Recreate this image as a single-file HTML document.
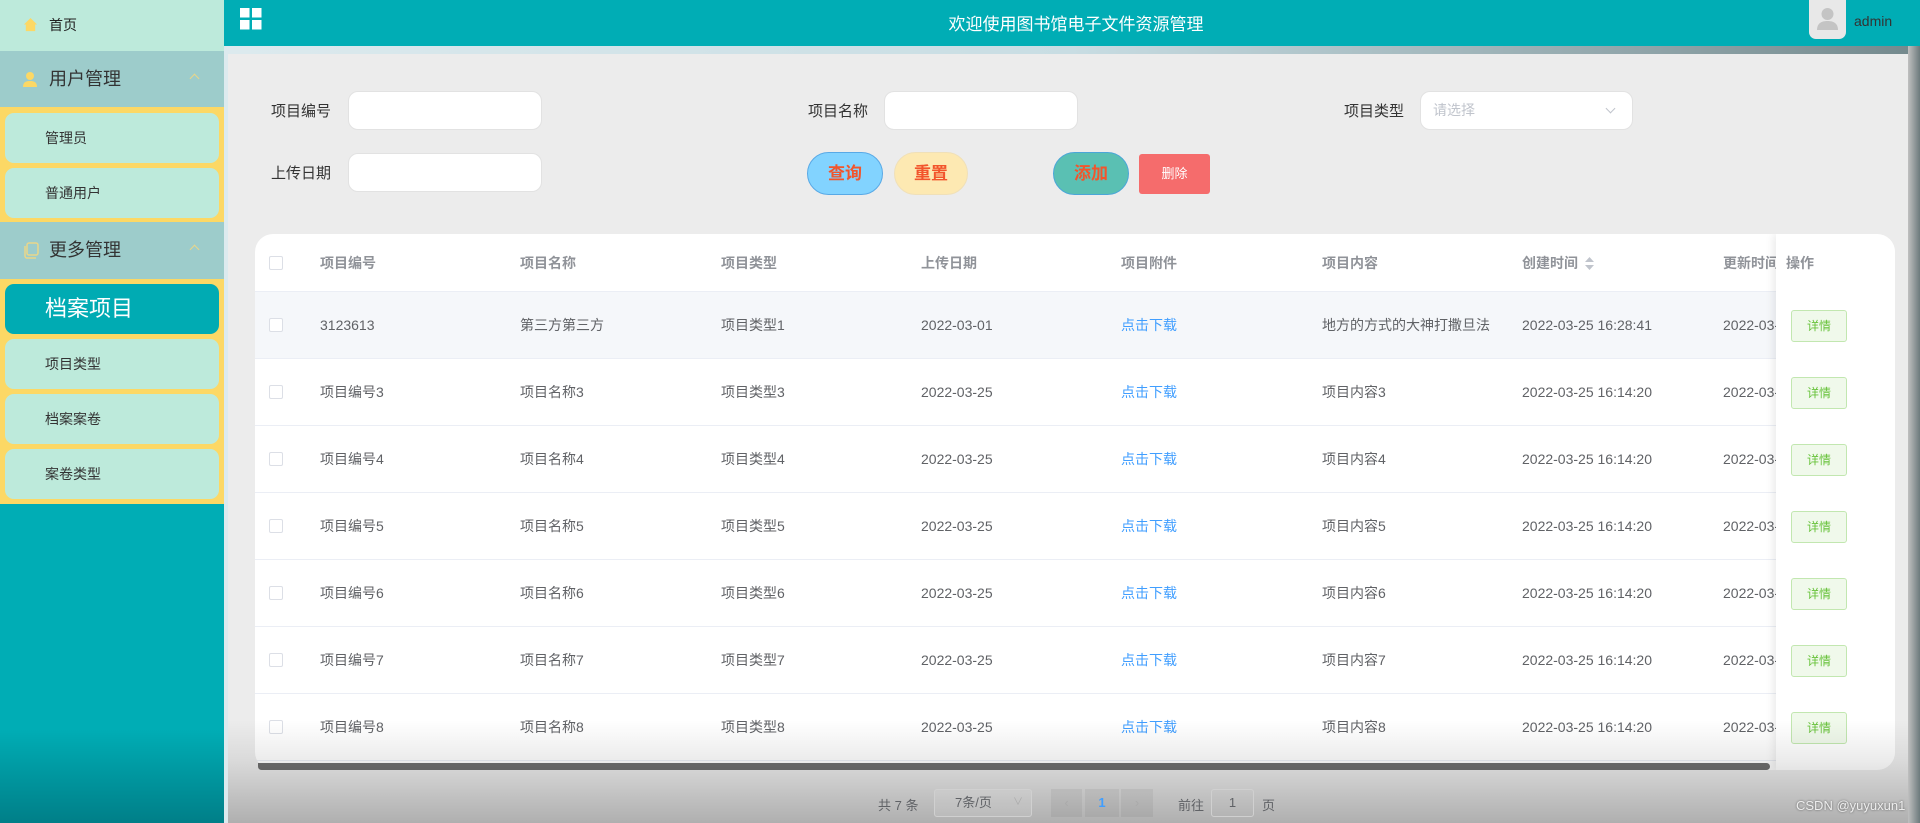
<!DOCTYPE html>
<html><head><meta charset="utf-8">
<style>
*{margin:0;padding:0;box-sizing:border-box}
body{width:1920px;height:823px;overflow:hidden;position:relative;font-family:"Liberation Sans","Noto Sans CJK SC",sans-serif;background:#ececec}
.abs{position:absolute}
#side{left:0;top:0;width:224px;height:823px;background:linear-gradient(#00adb5 0,#00adb5 730px,#007f88 823px)}
.top1{left:0;top:0;width:224px;height:51px;background:#bdeadb;font-size:14px;color:#222;line-height:51px;padding-left:49px}
.grp{left:0;width:224px;height:57px;background:#9dcccb;font-size:18px;color:#333;line-height:57px;padding-left:49px}
.yel{left:0;width:224px;background:#fcd865}
.it{left:5px;width:214px;height:50px;background:#bdeadb;border-radius:9px;font-size:14px;color:#333;line-height:50px;padding-left:40px}
.act{background:#00abb3;color:#fff;font-size:22px}
.chev{position:absolute;left:191px;top:24px;width:7px;height:7px;border-left:1px solid #e9d68a;border-top:1px solid #e9d68a;transform:rotate(45deg)}
#hdr{left:224px;top:0;width:1696px;height:46px;background:#00adb5}
.strip{left:226px;top:46px;width:1694px;height:8px;background:linear-gradient(90deg,#dceaee,#c8dde3 50%,#74898d)}
.lstrip{left:224px;top:46px;width:4px;height:777px;background:#dceaee}
.rb{left:1908px;top:46px;width:12px;height:777px;background:linear-gradient(90deg,#c0c0c0,#6c7a7c)}
.lbl{font-size:15px;color:#333}
.inp{background:#fff;border:1px solid #e2e2e2;border-radius:10px;height:39px}
.btn{height:43px;border-radius:22px;font-size:17px;font-weight:bold;color:#f2552c;text-align:center;line-height:41px}
#tbl{left:255px;top:234px;width:1640px;height:536px;background:#fff;border-radius:18px;overflow:hidden}
.row{position:absolute;left:0;width:1640px;height:67px;border-bottom:1px solid #ebeef5;font-size:14px;color:#606266}
.row span{position:absolute;top:0;line-height:66px;white-space:nowrap}
.hd span{color:#909399;font-weight:bold}
.cb{position:absolute;left:14px;top:26px;width:14px;height:14px;border:1px solid #dcdfe6;border-radius:2px;background:#fff}
.fix{left:1521px;top:0;width:119px;height:536px;background:#fff;box-shadow:-3px 0 8px rgba(0,0,0,.08)}
.det{position:absolute;left:15px;width:56px;height:32px;border:1px solid #c2e7b0;background:#f0f9eb;color:#67c23a;font-size:12px;text-align:center;line-height:30px;border-radius:3px}
.link{color:#409eff}
.fade{left:228px;top:720px;width:1680px;height:103px;background:linear-gradient(rgba(0,0,0,0),rgba(0,0,0,.08) 40%,rgba(0,0,0,.26))}
.pg{font-size:13px;color:#606266}
</style></head><body>
<div id="side" class="abs"></div>
<div class="abs top1"><svg class="abs" style="left:23px;top:17px" width="15" height="15" viewBox="0 0 16 16"><path d="M8 1L1 8h2v7h10V8h2z" fill="#fcd865"/></svg>首页</div>
<div class="abs grp" style="top:51px"><svg class="abs" style="left:22px;top:20px" width="16" height="17" viewBox="0 0 16 17"><circle cx="8" cy="5" r="4" fill="#fcd865"/><path d="M1 16c0-5 3-6 7-6s7 1 7 6z" fill="#fcd865"/></svg>用户管理<span class="chev"></span></div>
<div class="abs yel" style="top:107px;height:115px"></div>
<div class="abs it" style="top:113px">管理员</div>
<div class="abs it" style="top:168px">普通用户</div>
<div class="abs grp" style="top:222px"><svg class="abs" style="left:22px;top:20px" width="17" height="17" viewBox="0 0 17 17"><rect x="5" y="1" width="11" height="12" rx="2" fill="none" stroke="#e9d68a" stroke-width="1.5"/><path d="M3 4v10a2 2 0 0 0 2 2h9" fill="none" stroke="#e9d68a" stroke-width="1.5"/></svg>更多管理<span class="chev"></span></div>
<div class="abs yel" style="top:279px;height:225px"></div>
<div class="abs it act" style="top:284px">档案项目</div>
<div class="abs it" style="top:339px">项目类型</div>
<div class="abs it" style="top:394px">档案案卷</div>
<div class="abs it" style="top:449px">案卷类型</div>

<div id="hdr" class="abs"></div>
<svg class="abs" style="left:240px;top:8px" width="22" height="22" viewBox="0 0 22 22"><rect x="0" y="0" width="9.5" height="9.5" fill="#fff"/><rect x="12" y="0" width="9.5" height="9.5" fill="#fff"/><rect x="0" y="12" width="9.5" height="9.5" fill="#fff"/><rect x="12" y="12" width="9.5" height="9.5" fill="#fff"/></svg>
<div class="abs" style="left:900px;top:10px;width:352px;text-align:center;color:#fff;font-size:17px">欢迎使用图书馆电子文件资源管理</div>
<div class="abs" style="left:1809px;top:0;width:37px;height:39px;background:#e8e8e8;border-radius:0 0 7px 7px"><svg width="37" height="39" viewBox="0 0 37 39"><circle cx="18.5" cy="14" r="6" fill="#c4c4c4"/><path d="M8 30c0-7 5-9 10.5-9S29 23 29 30z" fill="#c4c4c4"/></svg></div>
<div class="abs" style="left:1854px;top:13px;font-size:14px;color:#333">admin</div>
<div class="abs strip"></div>
<div class="abs lstrip"></div>
<div class="abs rb"></div>

<div class="abs lbl" style="left:271px;top:100px">项目编号</div>
<div class="abs inp" style="left:348px;top:91px;width:194px"></div>
<div class="abs lbl" style="left:271px;top:162px">上传日期</div>
<div class="abs inp" style="left:348px;top:153px;width:194px"></div>
<div class="abs lbl" style="left:808px;top:100px">项目名称</div>
<div class="abs inp" style="left:884px;top:91px;width:194px"></div>
<div class="abs lbl" style="left:1344px;top:100px">项目类型</div>
<div class="abs inp" style="left:1420px;top:91px;width:213px;font-size:14px;color:#c0c4cc;line-height:37px;padding-left:12px">请选择<span style="position:absolute;right:18px;top:13px;width:7px;height:7px;border-right:1px solid #c0c4cc;border-bottom:1px solid #c0c4cc;transform:rotate(45deg)"></span></div>
<div class="abs btn" style="left:807px;top:152px;width:76px;background:#82d3ff;border:1px solid #58a9e6">查询</div>
<div class="abs btn" style="left:894px;top:152px;width:74px;background:#fde9b2;border:1px solid #f0e0b8">重置</div>
<div class="abs btn" style="left:1053px;top:152px;width:76px;background:#5ac0b3;border:1px solid #4aa6d8">添加</div>
<div class="abs" style="left:1139px;top:154px;width:71px;height:40px;background:#f56c6c;border-radius:3px;color:#fff;font-size:13px;text-align:center;line-height:40px">删除</div>

<div id="tbl" class="abs">
<div class="row hd" style="top:0;height:58px"><i class="cb" style="top:22px"></i><span style="left:65px;line-height:58px">项目编号</span><span style="left:265px;line-height:58px">项目名称</span><span style="left:466px;line-height:58px">项目类型</span><span style="left:666px;line-height:58px">上传日期</span><span style="left:866px;line-height:58px">项目附件</span><span style="left:1067px;line-height:58px">项目内容</span><span style="left:1267px;line-height:58px">创建时间</span><svg style="position:absolute;left:1330px;top:23px" width="9" height="13" viewBox="0 0 9 13"><path d="M4.5 0L9 5H0zM4.5 13L0 8h9z" fill="#c0c4cc"/></svg><span style="left:1468px;line-height:58px">更新时间</span></div>
<div class="row" style="top:58px;background:#f5f7fa"><i class="cb"></i><span style="left:65px">3123613</span><span style="left:265px">第三方第三方</span><span style="left:466px">项目类型1</span><span style="left:666px">2022-03-01</span><span style="left:866px" class="link">点击下载</span><span style="left:1067px">地方的方式的大神打撒旦法</span><span style="left:1267px">2022-03-25 16:28:41</span><span style="left:1468px">2022-03-</span></div>
<div class="row" style="top:125px"><i class="cb"></i><span style="left:65px">项目编号3</span><span style="left:265px">项目名称3</span><span style="left:466px">项目类型3</span><span style="left:666px">2022-03-25</span><span style="left:866px" class="link">点击下载</span><span style="left:1067px">项目内容3</span><span style="left:1267px">2022-03-25 16:14:20</span><span style="left:1468px">2022-03-</span></div>
<div class="row" style="top:192px"><i class="cb"></i><span style="left:65px">项目编号4</span><span style="left:265px">项目名称4</span><span style="left:466px">项目类型4</span><span style="left:666px">2022-03-25</span><span style="left:866px" class="link">点击下载</span><span style="left:1067px">项目内容4</span><span style="left:1267px">2022-03-25 16:14:20</span><span style="left:1468px">2022-03-</span></div>
<div class="row" style="top:259px"><i class="cb"></i><span style="left:65px">项目编号5</span><span style="left:265px">项目名称5</span><span style="left:466px">项目类型5</span><span style="left:666px">2022-03-25</span><span style="left:866px" class="link">点击下载</span><span style="left:1067px">项目内容5</span><span style="left:1267px">2022-03-25 16:14:20</span><span style="left:1468px">2022-03-</span></div>
<div class="row" style="top:326px"><i class="cb"></i><span style="left:65px">项目编号6</span><span style="left:265px">项目名称6</span><span style="left:466px">项目类型6</span><span style="left:666px">2022-03-25</span><span style="left:866px" class="link">点击下载</span><span style="left:1067px">项目内容6</span><span style="left:1267px">2022-03-25 16:14:20</span><span style="left:1468px">2022-03-</span></div>
<div class="row" style="top:393px"><i class="cb"></i><span style="left:65px">项目编号7</span><span style="left:265px">项目名称7</span><span style="left:466px">项目类型7</span><span style="left:666px">2022-03-25</span><span style="left:866px" class="link">点击下载</span><span style="left:1067px">项目内容7</span><span style="left:1267px">2022-03-25 16:14:20</span><span style="left:1468px">2022-03-</span></div>
<div class="row" style="top:460px"><i class="cb"></i><span style="left:65px">项目编号8</span><span style="left:265px">项目名称8</span><span style="left:466px">项目类型8</span><span style="left:666px">2022-03-25</span><span style="left:866px" class="link">点击下载</span><span style="left:1067px">项目内容8</span><span style="left:1267px">2022-03-25 16:14:20</span><span style="left:1468px">2022-03-</span></div>
<div class="abs fix">
<div style="position:absolute;left:10px;top:0;line-height:58px;font-size:14px;color:#909399;font-weight:bold">操作</div>
<div class="det" style="top:76px">详情</div>
<div class="det" style="top:143px">详情</div>
<div class="det" style="top:210px">详情</div>
<div class="det" style="top:277px">详情</div>
<div class="det" style="top:344px">详情</div>
<div class="det" style="top:411px">详情</div>
<div class="det" style="top:478px">详情</div>
</div>
</div>
<div class="abs" style="left:258px;top:763px;width:1512px;height:7px;background:#6e6e6e;border-radius:0 4px 4px 4px"></div>
<div class="abs fade"></div>

<div class="abs pg" style="left:878px;top:795px">共 7 条</div>
<div class="abs pg" style="left:934px;top:789px;width:98px;height:28px;border:1px solid #d0d0d0;border-radius:3px;padding-left:20px;line-height:26px;background:rgba(255,255,255,.1)">7条/页<span style="position:absolute;right:8px;color:#aaa;font-size:10px">∨</span></div>
<div class="abs pg" style="left:1051px;top:789px;width:31px;height:28px;background:rgba(0,0,0,.05);text-align:center;line-height:28px;color:#aaa">‹</div>
<div class="abs pg" style="left:1085px;top:789px;width:34px;height:28px;background:rgba(0,0,0,.05);text-align:center;line-height:28px;color:#409eff;font-weight:bold">1</div>
<div class="abs pg" style="left:1121px;top:789px;width:32px;height:28px;background:rgba(0,0,0,.05);text-align:center;line-height:28px;color:#aaa">›</div>
<div class="abs pg" style="left:1178px;top:795px">前往</div>
<div class="abs pg" style="left:1211px;top:789px;width:43px;height:28px;border:1px solid #d0d0d0;border-radius:3px;text-align:center;line-height:26px">1</div>
<div class="abs pg" style="left:1262px;top:795px">页</div>
<div class="abs" style="left:1796px;top:798px;font-size:13px;color:#eee;text-shadow:0 0 2px #555">CSDN @yuyuxun1</div>
</body></html>
